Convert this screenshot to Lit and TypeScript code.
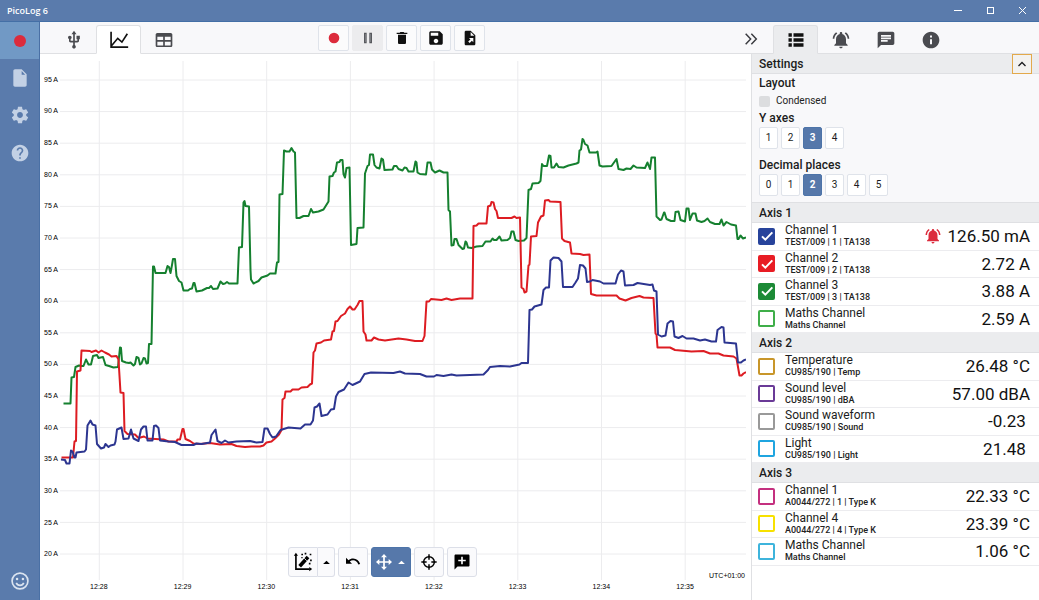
import { LitElement, html, svg, css } from "lit";
import { customElement, state } from "lit/decorators.js";
import { classMap } from "lit/directives/class-map.js";
import { styleMap } from "lit/directives/style-map.js";

interface Channel {
  name: string;
  source: string;
  value: string;
  unit: string;
  color: string;
  on?: boolean;
  alarm?: boolean;
}

interface Axis {
  title: string;
  channels: Channel[];
}

const AXES: Axis[] = [
  {
    title: "Axis 1",
    channels: [
      { name: "Channel 1", source: "TEST/009 | 1 | TA138", value: "126.50", unit: "mA", color: "#27439b", on: true, alarm: true },
      { name: "Channel 2", source: "TEST/009 | 2 | TA138", value: "2.72", unit: "A", color: "#e81c24", on: true },
      { name: "Channel 3", source: "TEST/009 | 3 | TA138", value: "3.88", unit: "A", color: "#1c8a36", on: true },
      { name: "Maths Channel", source: "Maths Channel", value: "2.59", unit: "A", color: "#3fae49" },
    ],
  },
  {
    title: "Axis 2",
    channels: [
      { name: "Temperature", source: "CU985/190 | Temp", value: "26.48", unit: "°C", color: "#c8962a" },
      { name: "Sound level", source: "CU985/190 | dBA", value: "57.00", unit: "dBA", color: "#6a3a97" },
      { name: "Sound waveform", source: "CU985/190 | Sound", value: "-0.23", unit: "", color: "#999999" },
      { name: "Light", source: "CU985/190 | Light", value: "21.48", unit: "", color: "#1fa5e0" },
    ],
  },
  {
    title: "Axis 3",
    channels: [
      { name: "Channel 1", source: "A0044/272 | 1 | Type K", value: "22.33", unit: "°C", color: "#c4307f" },
      { name: "Channel 4", source: "A0044/272 | 4 | Type K", value: "23.39", unit: "°C", color: "#f7e100" },
      { name: "Maths Channel", source: "Maths Channel", value: "1.06", unit: "°C", color: "#3db4dc" },
    ],
  },
];

const Y_LABELS = Array.from({ length: 16 }, (_, i) => `${95 - i * 5} A`);
const X_LABELS = Array.from({ length: 8 }, (_, i) => `12:${28 + i}`);

const GREEN =
  "63.5,403.5 70.5,403.5 71.5,377.5 74,377 75.5,367 79,365.5 81,366 83.5,366 86,359.5 88.5,364.5 91,364.5 93,356 97,355 98.5,358 103,357 105.5,365 109,366 113.5,367.5 118,367 120,347.5 121,348 122,361 126,362.5 129,363 130.5,362.5 133.5,365.5 135,364 136.5,357 138.5,358 140,364.5 141.5,363.5 143.5,358 145,358.5 146.5,363.5 148,363 149,344 151.5,344 153,266.5 154,266.5 155.5,273 165.5,273 167.5,266 169,267 170.5,273 172,265 173,259 175,259 176.5,276 179,281 181.5,282.5 183.5,290.5 188,290.5 190,289 192,288.5 193.5,283 194.5,283 196.5,291.5 202,290.5 207,288 209,288 211,286 213,289 217.5,288.5 220.5,281.5 223,284 225,283.5 227,282 229,283.5 237.5,283.5 239,247.5 242,247 243.5,202.5 244.5,201 245.5,206 249,206.5 250.5,270 251,279.5 253.5,283.5 258.5,281 261.5,277.5 267.5,275.5 270,273.5 275.5,273.5 277,262.5 278.5,262 279.5,194.5 282.5,194 284,150.5 286.5,151.5 289.5,151.5 291.5,148 293.5,151.5 295,152.5 296.5,218 299.5,218 303.5,216 308.5,216 311,209 313,212.5 318.5,211.5 323.5,209.5 326,205.5 328.5,201.5 329.5,176.5 332.5,176 334,172.5 335.5,171.5 337,162.5 339.5,162 340.5,160 342.5,160 343.5,174 345,177.5 346.5,168 349.5,167.5 351,245 356.5,244 357.5,228 363.5,227.5 365,173.5 367.5,166 369,165 370,154.5 373,154.5 374.5,165 376.5,167.5 379.5,168.5 381.5,158.5 383,159.5 384.5,170 392.5,169.5 394,166 396.5,166 398.5,169 402.5,170.5 404.5,167.5 406.5,168 408.5,171.5 413.5,171.5 415.5,161.5 416.5,162.5 417.5,172.5 420,174 426,174.5 427.5,162.5 430.5,162.5 432,169.5 435,172.5 439.5,170.5 443.5,172.5 447.5,172.5 448.5,210 450,211.5 451.5,245.5 453.5,245 454.5,239 456.5,239 458.5,245 462.5,249 464,248.5 465.5,241.5 466.5,242.5 468,247.5 471.5,248 476.5,246.5 482.5,246 485.5,241.5 490.5,241.5 492.5,238.5 494,240 496.5,240 499.5,236.5 501.5,240.5 507.5,240 510,238 511.5,231.5 513.5,231.5 515.5,240 518.5,241 524,240.5 526.5,238 528.5,190 531,189 532.5,183.5 538.5,183 540.5,181 542,164 543.5,166 547,166 549,155.5 550.5,156 551.5,167.5 554,167.5 556.5,163.5 558.5,167 563.5,167.5 568.5,165.5 576.5,163.5 578.5,162.5 579.5,150.5 581,149.5 582.5,139 583.5,140 585,144 587.5,145.5 589.5,152.5 596,152.5 597.5,151.5 599.5,165.5 602.5,166.5 611.5,166 616.5,159 618.5,169 623.5,170 626.5,168.5 630.5,169 633.5,165.5 636.5,167.5 645,168 647.5,162.5 650,169 651.5,157.5 655,157.5 656.5,216.5 660,220 661.5,219.5 664,212.5 664.5,212.5 666.5,219 671,221 674.5,221 675.5,212 678.5,211.5 680.5,220 685,221.5 686.5,208.5 688.5,208.5 690,220 692.5,213.5 695.5,213.5 697,220.5 701.5,222 704.5,221 707.5,218.5 710,222 715,224 719.5,224 721.5,219.5 723.5,225.5 726.5,222 731,224.5 736,225.5 737.5,239 738.5,239 740.5,235.5 743,238.5 746,237.5";

const RED =
  "61.5,457.5 73,457.5 74.5,441.5 76,441 77,371.5 80.5,370.5 81.5,350.5 90,351 91.5,352 96,350.5 98.5,352.5 101.5,350.5 105,352.5 109,354.5 111.5,356.5 116.5,356 118.5,359.5 120.5,392.5 123.5,393 124.5,431 127.5,434 135,434.5 138.5,438 144,436.5 147.5,438.5 163.5,439.5 168.5,441.5 176.5,441.5 177.5,439.5 180,439.5 182.5,429 183.5,429 185.5,439 190,441 193.5,443.5 200,444 210,443 220,444.5 231.5,444 236.5,446 245,447 251.5,446.5 260,446.5 263.5,445.5 266.5,442.5 271.5,441.5 275,438.5 279,434.5 281.5,430 282.5,399.5 284.5,398 285.5,391.5 290.5,391.5 292.5,389.5 298.5,389.5 301.5,387.5 307.5,387 310,384.5 312,383.5 313.5,352.5 315,350.5 316.5,343.5 321,342.5 324,340.5 331,339.5 332.5,331.5 334,331 335.5,321.5 337.5,321 341,316 345,313.5 347.5,309 350,306.5 352.5,309.5 354.5,309.5 357.5,305 359.5,301 362.5,301 363.5,331.5 365.5,334.5 366.5,340.5 371.5,340.5 374,337.5 378.5,339.5 385,340.5 398.5,338.5 406.5,339.5 415,341 422.5,341 424.5,336 426.5,301.5 429,301.5 431,299 441.5,300 446.5,298.5 451.5,300 460,298.5 472.5,298.5 473.5,226 476.5,225.5 478.5,223.5 486.5,223.5 488,206.5 490.5,205.5 491.5,202 493.5,202.5 495,209 496.5,211 498,218 511.5,218 514.5,216.5 516.5,218 520,217.5 521.5,287.5 523.5,289 524.5,292.5 526.5,291.5 528.5,265.5 529.5,264.5 531,236.5 536.5,236 538,222.5 541,216.5 543.5,215.5 545,200.5 548.5,200 550,201.5 560.5,202 562,238.5 564.5,241 570,242.5 571.5,253.5 580,254 583.5,255 589.5,254.5 591,294 596.5,295.5 616.5,295.5 619.5,298.5 625.5,300.5 631.5,298 639.5,296 643.5,297.5 653.5,298 655.5,333.5 656.5,334.5 657.5,347.5 670,347.5 675,350 691.5,351.5 703.5,351 710,353.5 718.5,353.5 723.5,355.5 733.5,356.5 736.5,358.5 739.5,375.5 741.5,375.5 743.5,373.5 746,372";

const BLUE =
  "61,459.5 65,460 66.5,463.5 69.5,463.5 71,450.5 72.5,451.5 74.5,457.5 75.5,457.5 76.5,452.5 84.5,451.5 86,449.5 87.5,425.5 90.5,420.5 92.5,424.5 95.5,425.5 97,444 101,448.5 104,447.5 105.5,444 108.5,447 110.5,445.5 114.5,444.5 115.5,441.5 117,429.5 121.5,427.5 123.5,439 128.5,438.5 131,429.5 133.5,438.5 138.5,441 141,429.5 143.5,426.5 146,426.5 147.5,440.5 152.5,440.5 154,426 156,425.5 158.5,428 160,440.5 168.5,441.5 175,442 181.5,445 193.5,445 196.5,443.5 201.5,444 210,442.5 211.5,435 215.5,429.5 217.5,441 221.5,443 225,440.5 228.5,442.5 236.5,441.5 250,441 256.5,442.5 262.5,442 264.5,428.5 267.5,428.5 270,434 272.5,437.5 276,436.5 280.5,430 288.5,427.5 300.5,428.5 305,424.5 310.5,424.5 313,420.5 314.5,407.5 317,406.5 319.5,403.5 321.5,416 327.5,414.5 331,409.5 334,409 336,396.5 338.5,392 344,389.5 348.5,382.5 352.5,385 360,381.5 364.5,374 371,372.5 393.5,373 400,371.5 405,373.5 420,374 426.5,376.5 434,376.5 436.5,375 443.5,376 451.5,374.5 456.5,375.5 483.5,374.5 488,370 490,367 500,366 510,366.5 519.5,364.5 521.5,363 528,363 529.5,310 532,309.5 534.5,306.5 541.5,304.5 543.5,290 546,287.5 549,287.5 550.5,260.5 553.5,257.5 558.5,258 561.5,261.5 563,287 572.5,287 575.5,282.5 578,278.5 580,265 583,265.5 585.5,268.5 587,282 590,281.5 592.5,280 600,281.5 603.5,283.5 615.5,283.5 618,274.5 621,270.5 623.5,271.5 625,285.5 633.5,285 637.5,283 650,285 652.5,284.5 654,290.5 656.5,291.5 658,334.5 661.5,336.5 665.5,335.5 667.5,323.5 670.5,321 673,321.5 674.5,336.5 678.5,338 682.5,336 686.5,338.5 693.5,338.5 700,340.5 705,339.5 711.5,341.5 716,341.5 717.5,330 721.5,327 723.5,327.5 724.5,342.5 736,343.5 738,362.5 741,362.5 743.5,360.5 746,359.5";

const glyph = (body: unknown, size = "i20") =>
  html`<svg class="icon ${size}" viewBox="0 0 24 24" aria-hidden="true">${body}</svg>`;

const ICONS = {
  record: svg`<circle cx="12" cy="12" r="8" fill="#dc2b3c"/>`,
  file: svg`<path d="M6 1.5c-1.1 0-2 .9-2 2v17c0 1.1.9 2 2 2h12c1.1 0 2-.9 2-2V7.500L14 1.500zM14 3.600L18.200 8H14z" fill-rule="evenodd"/>`,
  gear: svg`<path d="M19.43 12.98c.04-.32.07-.64.07-.98s-.03-.66-.07-.98l2.11-1.650c.19-.15.24-.42.12-.64l-2-3.460c-.12-.22-.39-.3-.61-.22l-2.490 1c-.52-.4-1.080-.73-1.690-.98l-.38-2.650C14.460 2.180 14.250 2 14 2h-4c-.25 0-.46.18-.49.42l-.38 2.650c-.61.25-1.170.59-1.690.98l-2.490-1c-.23-.09-.49 0-.61.22l-2 3.460c-.13.22-.07.49.12.64l2.110 1.650c-.04.32-.07.65-.07.98s.03.66.07.98l-2.110 1.650c-.19.15-.24.42-.12.64l2 3.460c.12.22.39.3.61.22l2.490-1c.52.4 1.080.73 1.690.98l.38 2.650c.03.24.24.42.49.42h4c.25 0 .46-.18.49-.42l.38-2.650c.61-.25 1.170-.59 1.690-.98l2.490 1c.23.09.49 0 .61-.22l2-3.460c.12-.22.07-.49-.12-.64l-2.110-1.650zM12 15.500c-1.930 0-3.500-1.570-3.500-3.500s1.570-3.500 3.500-3.500 3.500 1.570 3.500 3.500-1.570 3.500-3.500 3.500z"/>`,
  help: svg`<path d="M12 2C6.480 2 2 6.480 2 12s4.480 10 10 10 10-4.480 10-10S17.520 2 12 2zm1 17h-2v-2h2v2zm2.070-7.750l-.9.920C13.450 12.900 13 13.500 13 15h-2v-.5c0-1.100.45-2.100 1.170-2.830l1.240-1.260c.37-.36.59-.86.59-1.410 0-1.100-.9-2-2-2s-2 .9-2 2H8c0-2.210 1.790-4 4-4s4 1.790 4 4c0 .88-.36 1.680-.93 2.250z"/>`,
  smile: svg`<g fill="none" stroke="currentColor" stroke-width="2"><circle cx="12" cy="12" r="9.500"/><path d="M7.500 14.200c.8 1.900 2.500 3 4.500 3s3.700-1.100 4.500-3"/></g><circle cx="8.500" cy="9.500" r="1.500"/><circle cx="15.500" cy="9.500" r="1.500"/>`,
  usb: svg`<path d="M15 7v4h1v2h-3V5h2l-3-4-3 4h2v8H8v-2.070c.7-.37 1.200-1.080 1.200-1.930 0-1.210-.99-2.200-2.200-2.200-1.210 0-2.200.99-2.200 2.200 0 .85.5 1.560 1.200 1.930V13c0 1.110.89 2 2 2h3v3.050c-.71.37-1.200 1.100-1.200 1.950 0 1.220.99 2.200 2.200 2.200 1.210 0 2.200-.98 2.200-2.200 0-.85-.49-1.580-1.200-1.950V15h3c1.110 0 2-.89 2-2v-2h1V7h-4z"/>`,
  chart: svg`<path d="M2.500 2v18.500H23M3 19l7.500-9 5 4.500 6.500-10" fill="none" stroke="currentColor" stroke-width="2"/>`,
  table: svg`<path fill-rule="evenodd" d="M4 3.500h16c1.100 0 2 .9 2 2v13c0 1.100-.9 2-2 2H4c-1.100 0-2-.9-2-2v-13c0-1.100.9-2 2-2zM4 8v4h7V8zm9 0v4h7V8zm-9 6v4.500h7V14zm9 0v4.500h7V14z"/>`,
  pause: svg`<path d="M6 4h4v16H6zM14 4h4v16h-4z" fill="#57595e"/><path d="M7.500 6h1v12h-1zM15.500 6h1v12h-1z" fill="#8a8c90"/>`,
  trash: svg`<path d="M6 19c0 1.100.9 2 2 2h8c1.100 0 2-.9 2-2V7H6v12zM20 4h-4.500l-1-1h-5l-1 1H4v2h16V4z"/>`,
  save: svg`<path d="M17 3H5c-1.110 0-2 .9-2 2v14c0 1.100.89 2 2 2h14c1.100 0 2-.9 2-2V7l-4-4zm-5 16c-1.660 0-3-1.340-3-3s1.340-3 3-3 3 1.340 3 3-1.340 3-3 3zm3-10H5V5h10v4z"/>`,
  exportFile: svg`<path fill-rule="evenodd" d="M6 1c-1.100 0-2 .9-2 2v18c0 1.100.9 2 2 2h12c1.100 0 2-.9 2-2V8l-7-7zM13 3L18.500 8.500H13zM10.500 12H17v6.500l-2.200-2.200-3.300 3.200-2.200-2.200 3.300-3.200z"/>`,
  forward: svg`<path d="M4 4l7.500 8L4 20M12.500 4l7.500 8-7.500 8" fill="none" stroke="currentColor" stroke-width="2.200"/>`,
  list: svg`<path d="M3 14h4v-4H3zm0 6h4v-4H3zM3 8h4V4H3zm6 6h12v-4H9zm0 6h12v-4H9zM9 4v4h12V4z"/>`,
  bell: svg`<path d="M7.580 4.080L6.150 2.650C3.750 4.480 2.170 7.300 2.030 10.500h2c.15-2.650 1.510-4.970 3.550-6.420zm12.390 6.420h2c-.15-3.200-1.730-6.020-4.120-7.850l-1.420 1.430c2.020 1.450 3.390 3.770 3.540 6.420zM18 11c0-3.070-1.640-5.640-4.500-6.320V4c0-.83-.67-1.500-1.500-1.500s-1.500.67-1.500 1.500v.68C7.630 5.360 6 7.920 6 11v5l-2 2v1h16v-1l-2-2v-5zm-6 11c.14 0 .27-.01.4-.04.65-.14 1.180-.58 1.440-1.180.1-.24.15-.5.15-.78h-4c.01 1.100.9 2 2.010 2z"/>`,
  chat: svg`<path d="M20 2H4c-1.100 0-1.990.9-1.990 2L2 22l4-4h14c1.100 0 2-.9 2-2V4c0-1.100-.9-2-2-2zM6 9h12v2H6V9zm8 5H6v-2h8v2zm4-6H6V6h12v2z"/>`,
  info: svg`<path d="M12 2C6.480 2 2 6.480 2 12s4.480 10 10 10 10-4.480 10-10S17.520 2 12 2zm1.200 15h-2.400v-6h2.400v6zm0-8h-2.400V6.600h2.400V9z"/>`,
  up: svg`<path d="M5 16l7-7 7 7" fill="none" stroke="currentColor" stroke-width="2.600"/>`,
  triangle: svg`<path d="M3 16l9-9 9 9z"/>`,
  wand: svg`<path d="M3.500 3v17.500H20" fill="none" stroke="currentColor" stroke-width="2"/><path d="M3.500 1L6 4.500H1zM23 20.500L19.500 23v-5z"/><path d="M8 17L18 6" stroke="currentColor" stroke-width="4.400"/><path d="M13.500 7.500l3 3" stroke="#fafafc" stroke-width="1"/><path d="M10 2h2v2h-2zM14 1h2v2h-2zM20 2h2v2h-2zM20.500 9h2v2h-2zM10 6h1.500v1.500H10zM19 13h2v2h-2z"/>`,
  undo: svg`<path d="M1.500 5.500v9h9L7.200 11.200c1.400-1.100 3.100-1.700 5-1.700 3.700 0 6.700 2.500 7.800 6.300l2.700-.9C21.200 10 17.200 6.800 12.300 6.800c-2.700 0-5.100.9-7 2.500z"/>`,
  move: svg`<path d="M12 0l4.500 5H13.300v5.700H19V7.500l5 4.500-5 4.500v-3.200h-5.700V19h3.200L12 24l-4.500-5h3.200v-5.700H5v3.200L0 12l5-4.500v3.200h5.700V5H7.500z"/>`,
  target: svg`<circle cx="12" cy="12" r="8" fill="none" stroke="currentColor" stroke-width="2.200"/><path d="M12 .5v8M12 15.500v8M.5 12h8M15.500 12h8" stroke="currentColor" stroke-width="2.200"/>`,
  note: svg`<path fill-rule="evenodd" d="M3.500 2h17c.8 0 1.500.7 1.500 1.500v13c0 .8-.7 1.500-1.500 1.500H6l-4 4V3.500C2 2.700 2.700 2 3.500 2zM10.900 5v3.900H7v2.200h3.900V15h2.200v-3.900H17V8.900h-3.900V5z"/>`,
  tick: svg`<path d="M4.500 12.500l5 5L20 6.500" fill="none" stroke="#fff" stroke-width="3"/>`,
};

@customElement("app-root")
export class AppRoot extends LitElement {
  @state() private yAxes = 3;
  @state() private decimals = 2;

  static styles = css`
    :host {
      display: flex;
      flex-direction: column;
      height: 100vh;
      overflow: hidden;
      background: #fff;
      color: #1b1c20;
      font-family: Roboto, "Liberation Sans", sans-serif;
      font-size: 12px;
      line-height: 16px;
    }
    * { box-sizing: border-box; }
    button {
      display: flex;
      align-items: center;
      justify-content: center;
      margin: 0;
      padding: 0;
      border: 0;
      background: none;
      color: inherit;
      font: inherit;
    }
    h1, h2, h3, ul { margin: 0; padding: 0; font-size: 12px; font-weight: 500; }
    .icon { display: block; flex: none; fill: currentColor; }
    .i9 { width: 9px; height: 9px; }
    .i12 { width: 12px; height: 12px; }
    .i16 { width: 16px; height: 16px; }
    .i18 { width: 18px; height: 18px; }
    .i20 { width: 20px; height: 20px; }

    .titlebar {
      display: flex;
      flex: none;
      align-items: center;
      justify-content: space-between;
      height: 22px;
      padding: 0 1px 0 7px;
      border-bottom: 1px solid #446fa6;
      background: #5a7bac;
      color: #fff;
    }
    .titlebar h1 { font: 600 9px/16px "Open Sans", sans-serif; }
    .window { display: flex; }
    .window button { width: 32px; height: 21px; }
    .window svg { width: 9px; height: 9px; fill: none; stroke: #fff; }

    .body { display: flex; flex: 1; min-height: 0; }
    .rail {
      display: flex;
      flex: none;
      flex-direction: column;
      width: 40px;
      border-right: 1px solid #4a70a5;
      background: #5a7bac;
      color: #c3d1e5;
    }
    .rail button { width: 40px; height: 38px; }
    .rail .rec { width: 39px; height: 37px; background: #7199c5; }
    .rail .rec + button { height: 37px; }
    .rail .bottom { margin-top: auto; color: #dbe4f0; }

    .work { display: flex; flex: 1; flex-direction: column; min-width: 0; }
    .topbar {
      display: flex;
      flex: none;
      align-items: flex-end;
      height: 32px;
      border-bottom: 1px solid #dfe0e3;
      background: #f8f8fa;
    }
    .tabs { display: flex; flex: none; color: #4a4b50; }
    .tabs.left { padding-left: 11px; }
    .tabs.right { width: 266px; }
    .tab {
      width: 45px;
      height: 29px;
      margin-bottom: -1px;
      border: 1px solid transparent;
      border-radius: 3px 3px 0 0;
    }
    .tab.active { border-color: #dfe0e3; border-bottom-color: #fff; background: #fff; color: #111; }
    .right .tab.active { border-bottom-color: #ebecee; background: #ebecee; }
    .actions { display: flex; gap: 3px; margin: 0 auto 2px 132px; color: #111; }
    .tool {
      width: 31px;
      height: 26px;
      border: 1px solid #dfe3ea;
      border-radius: 2px;
      background: #fbfbfc;
    }
    .tool.off { border-color: #ececee; background: #ececee; }
    .more { flex: none; width: 44px; height: 28px; color: #3a3b40; }

    .content { display: flex; flex: 1; min-height: 0; }
    .graph {
      position: relative;
      display: grid;
      flex: 1;
      grid-template-columns: 20px 1fr;
      grid-template-rows: 1fr 20px;
      min-width: 0;
      padding: 7px 5px 0 0;
      color: #000;
      font: 7px/8px "Liberation Sans", Arial, sans-serif;
    }
    .ylabels {
      display: grid;
      grid-auto-rows: 1fr;
      align-items: center;
      padding: 3px 2px 10px 0;
      text-align: right;
      white-space: nowrap;
    }
    .plot { display: block; width: 100%; height: 100%; min-height: 0; }
    .plot-cell { position: relative; min-height: 0; overflow: hidden; }
    .grid-line { stroke: #ececee; stroke-width: 1; vector-effect: non-scaling-stroke; }
    .trace {
      fill: none;
      stroke-width: 2;
      stroke-linejoin: round;
      vector-effect: non-scaling-stroke;
    }
    .xlabels {
      display: grid;
      grid-auto-flow: column;
      grid-auto-columns: 1fr;
      grid-column: 1 / -1;
      padding: 3px 19px 0 17px;
      text-align: center;
    }
    .utc { position: absolute; right: 6px; bottom: 20px; background: #fff; }
    .floating {
      position: absolute;
      right: 26px;
      bottom: 23px;
      left: 0;
      display: flex;
      gap: 3px;
      justify-content: center;
    }
    .float {
      width: 30px;
      height: 30px;
      border: 1px solid #dcdfe8;
      border-radius: 3px;
      background: #fafafc;
    }
    .split { display: flex; }
    .split .float:first-child { border-radius: 3px 0 0 3px; }
    .float.caret { width: 17px; border-left: 0; border-radius: 0 3px 3px 0; }
    .float.active { gap: 5px; width: 40px; border-color: #4d74a9; background: #5678aa; color: #fff; }

    .panel {
      flex: none;
      width: 288px;
      overflow: hidden;
      border-left: 1px solid #dfe0e3;
      background: #fff;
    }
    .bar {
      display: flex;
      align-items: center;
      justify-content: space-between;
      height: 20px;
      padding: 0 7px;
      border-bottom: 1px solid #dfe0e3;
      background: #ebecee;
    }
    .collapse { width: 20px; height: 20px; border: 1px solid #e3a94b; background: #f3f2f0; }
    .settings { padding: 1px 7px 6px; border-bottom: 1px solid #dfe0e3; background: #f8f8fa; }
    .settings h3 { line-height: 16px; }
    .condensed { display: flex; gap: 6px; align-items: center; margin: 2px 0 1px; font-size: 10px; color: #222; }
    .condensed input {
      width: 11px;
      height: 11px;
      margin: 0;
      border-radius: 2px;
      appearance: none;
      background: #dcdddf;
    }
    .choices { display: flex; gap: 3px; margin-top: 1px; }
    .choices.first { margin-bottom: 8px; }
    .choice {
      width: 19px;
      height: 22px;
      border: 1px solid #dfe3ea;
      border-radius: 2px;
      background: #fff;
      font-size: 10px;
    }
    .choice.active { border-color: #4d74a9; background: #5678aa; color: #fff; font-weight: 700; }

    .channels { list-style: none; font-weight: 400; }
    .channel { height: 28px; border-bottom: 1px solid #ececef; }
    .channel:nth-child(even) { height: 27px; }
    .channel label { display: flex; align-items: center; height: 100%; padding: 0 9px 1px 6px; }
    .check { display: grid; flex: none; width: 17px; height: 17px; margin-right: 10px; place-items: center; }
    .check input {
      grid-area: 1 / 1;
      width: 17px;
      height: 17px;
      margin: 0;
      border: 2px solid var(--tone);
      border-radius: 2px;
      appearance: none;
      background: #fff;
    }
    .check input:checked { background: var(--tone); }
    .check svg { z-index: 1; grid-area: 1 / 1; pointer-events: none; visibility: hidden; }
    .check input:checked + svg { visibility: visible; }
    .names { display: flex; flex: 1; flex-direction: column; min-width: 0; }
    .name { line-height: 13px; }
    .source { color: #222; font-size: 9px; font-weight: 500; line-height: 11px; }
    .alarm { color: #dc2b3c; margin-right: 6px; }
    .value { font-size: 17px; line-height: 20px; white-space: pre; color: #111; }
  `;

  private tab(icon: unknown, label: string, active = false) {
    return html`<button class=${classMap({ tab: true, active })} role="tab" aria-selected=${active} aria-label=${label}>
      ${glyph(icon)}
    </button>`;
  }

  private choices(values: number[], current: number, pick: (n: number) => void, first = false) {
    return html`<div class=${classMap({ choices: true, first })}>
      ${values.map(
        (n) => html`<button
          class=${classMap({ choice: true, active: n === current })}
          aria-pressed=${n === current}
          @click=${() => pick(n)}
        >${n}</button>`
      )}
    </div>`;
  }

  private channel(c: Channel) {
    return html`<li class="channel">
      <label>
        <span class="check" style=${styleMap({ "--tone": c.color })}>
          <input type="checkbox" .checked=${!!c.on} />
          ${glyph(ICONS.tick, "i16")}
        </span>
        <span class="names">
          <span class="name">${c.name}</span>
          <span class="source">${c.source}</span>
        </span>
        ${c.alarm ? html`<span class="alarm">${glyph(ICONS.bell, "i18")}</span>` : ""}
        <span class="value">${c.value + " " + c.unit}</span>
      </label>
    </li>`;
  }

  private graph() {
    return html`<section class="graph" aria-label="Graph">
      <div class="ylabels">${Y_LABELS.map((l) => html`<span>${l}</span>`)}</div>
      <div class="plot-cell">
        <svg class="plot" viewBox="60 61 686 519" preserveAspectRatio="none">
          ${Y_LABELS.map((_, i) => {
            const y = 80 + i * 31.6;
            return svg`<line class="grid-line" x1="60" x2="746" y1=${y} y2=${y} />`;
          })}
          ${X_LABELS.map((_, i) => {
            const x = 99.3 + i * 83.7;
            return svg`<line class="grid-line" x1=${x} x2=${x} y1="61" y2="580" />`;
          })}
          <polyline class="trace" stroke="#15802f" points=${GREEN} />
          <polyline class="trace" stroke="#dd1c22" points=${RED} />
          <polyline class="trace" stroke="#2c3590" points=${BLUE} />
        </svg>
      </div>
      <div class="xlabels">${X_LABELS.map((l) => html`<span>${l}</span>`)}</div>
      <span class="utc">UTC+01:00</span>
      <div class="floating">
        <div class="split">
          <button class="float" aria-label="Auto scale">${glyph(ICONS.wand)}</button>
          <button class="float caret" aria-label="Scale options">${glyph(ICONS.triangle, "i9")}</button>
        </div>
        <button class="float" aria-label="Undo">${glyph(ICONS.undo, "i16")}</button>
        <button class="float active" aria-label="Pan">${glyph(ICONS.move, "i16")}${glyph(ICONS.triangle, "i9")}</button>
        <button class="float" aria-label="Crosshair">${glyph(ICONS.target, "i16")}</button>
        <button class="float" aria-label="Add note">${glyph(ICONS.note, "i18")}</button>
      </div>
    </section>`;
  }

  render() {
    return html`
      <header class="titlebar">
        <h1>PicoLog 6</h1>
        <div class="window">
          <button aria-label="Minimise"><svg viewBox="0 0 9 9"><path d="M0 4.500h8" /></svg></button>
          <button aria-label="Maximise"><svg viewBox="0 0 9 9"><rect x="1.500" y="1.500" width="6" height="6" /></svg></button>
          <button aria-label="Close"><svg viewBox="0 0 9 9"><path d="M1 1l7 7M8 1L1 8" /></svg></button>
        </div>
      </header>
      <div class="body">
        <nav class="rail">
          <button class="rec" aria-label="Record">${glyph(ICONS.record, "i18")}</button>
          <button aria-label="File">${glyph(ICONS.file)}</button>
          <button aria-label="Settings">${glyph(ICONS.gear)}</button>
          <button aria-label="Help">${glyph(ICONS.help)}</button>
          <button class="bottom" aria-label="Feedback">${glyph(ICONS.smile)}</button>
        </nav>
        <main class="work">
          <div class="topbar">
            <div class="tabs left" role="tablist">
              ${this.tab(ICONS.usb, "Devices")}${this.tab(ICONS.chart, "Graph", true)}${this.tab(ICONS.table, "Table")}
            </div>
            <div class="actions">
              <button class="tool" aria-label="Record">${glyph(ICONS.record, "i16")}</button>
              <button class="tool off" aria-label="Pause">${glyph(ICONS.pause, "i16")}</button>
              <button class="tool" aria-label="Delete">${glyph(ICONS.trash, "i16")}</button>
              <button class="tool" aria-label="Save">${glyph(ICONS.save, "i18")}</button>
              <button class="tool" aria-label="Export">${glyph(ICONS.exportFile, "i16")}</button>
            </div>
            <button class="more" aria-label="Hide panel">${glyph(ICONS.forward, "i16")}</button>
            <div class="tabs right" role="tablist">
              ${this.tab(ICONS.list, "Channels", true)}${this.tab(ICONS.bell, "Alarms")}${this.tab(ICONS.chat, "Notes")}${this.tab(ICONS.info, "Information")}
            </div>
          </div>
          <div class="content">
            ${this.graph()}
            <aside class="panel">
              <div class="bar">
                <h2>Settings</h2>
                <button class="collapse" aria-label="Collapse">${glyph(ICONS.up, "i12")}</button>
              </div>
              <div class="settings">
                <h3>Layout</h3>
                <label class="condensed"><input type="checkbox" />Condensed</label>
                <h3>Y axes</h3>
                ${this.choices([1, 2, 3, 4], this.yAxes, (n) => (this.yAxes = n), true)}
                <h3>Decimal places</h3>
                ${this.choices([0, 1, 2, 3, 4, 5], this.decimals, (n) => (this.decimals = n))}
              </div>
              ${AXES.map(
                (a) => html`<section>
                  <div class="bar"><h2>${a.title}</h2></div>
                  <ul class="channels">${a.channels.map((c) => this.channel(c))}</ul>
                </section>`
              )}
            </aside>
          </div>
        </main>
      </div>
    `;
  }
}
